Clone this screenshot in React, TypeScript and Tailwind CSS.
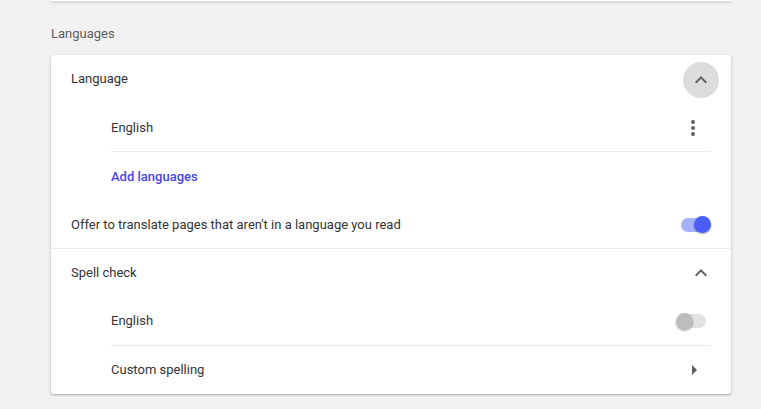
import React from 'react';

const font = { fontFamily: 'Roboto, "Noto Sans", sans-serif' };

function ChevronUp() {
  return (
    <svg width="12" height="8" viewBox="0 0 12 8" className="block">
      <path d="M1.4 7.4 6 2.8l4.6 4.6L12 6 6 0 0 6z" fill="#5f5f5f" />
    </svg>
  );
}

function Toggle({ on }: { on: boolean }) {
  return (
    <div className="relative w-[34px] h-[17px] flex items-center">
      <div
        className={
          on
            ? 'ml-[4px] h-[14px] w-[28px] rounded-full bg-[#a5b1fb]'
            : 'ml-[4px] h-[14px] w-[26px] rounded-full bg-[#e2e2e2]'
        }
      />
      <div
        className={
          on
            ? 'absolute right-0 top-0 h-[17px] w-[17px] rounded-full bg-[#4b5ef5] shadow-[0_1px_2px_rgba(0,0,0,0.35)]'
            : 'absolute left-0 top-0 h-[17px] w-[17px] rounded-full bg-[#bdbdbd] shadow-[0_1px_2px_rgba(0,0,0,0.3)]'
        }
      />
    </div>
  );
}

export default function App() {
  return (
    <div className="min-h-[409px] w-[761px] bg-[#f1f1f1] relative overflow-hidden" style={font}>
      <div className="ml-[51px] mr-[30px] h-[1px] bg-white shadow-[0_1px_3px_rgba(0,0,0,0.35)]" />
      <div className="ml-[51px] mr-[30px] pt-[24px] pb-[12px] text-[13px] text-[#5e5e5e] leading-[18px]">
        Languages
      </div>
      <div className="ml-[51px] mr-[30px] bg-white rounded-[2px] shadow-[0_1px_2px_rgba(0,0,0,0.22),0_1px_3px_rgba(0,0,0,0.12)] text-[13px] text-[#333]">
        <div className="h-[49px] flex items-center pl-[20px] pr-[12px]">
          <span className="flex-1 -mt-[1px]">Language</span>
          <div className="w-[36px] h-[36px] mt-[1px] rounded-full bg-[#dcdcdc] flex items-center justify-center">
            <ChevronUp />
          </div>
        </div>
        <div className="pl-[60px] pr-[20px]">
          <div className="h-[48px] flex items-center border-b border-[#ebebeb]">
            <span className="flex-1">English</span>
            <div className="flex flex-col gap-[2px] mr-[16px] items-center">
              <span className="w-[4px] h-[4px] rounded-full bg-[#5f5f5f]" />
              <span className="w-[4px] h-[4px] rounded-full bg-[#5f5f5f]" />
              <span className="w-[4px] h-[4px] rounded-full bg-[#5f5f5f]" />
            </div>
          </div>
          <div className="h-[49px] flex items-center font-medium text-[#4646e6]">Add languages</div>
        </div>
        <div className="h-[48px] flex items-center pl-[20px] pr-[20px] border-b border-[#ebebeb]">
          <span className="flex-1">Offer to translate pages that aren't in a language you read</span>
          <Toggle on />
        </div>
        <div className="h-[48px] flex items-center pl-[20px] pr-[24px]">
          <span className="flex-1">Spell check</span>
          <ChevronUp />
        </div>
        <div className="pl-[60px] pr-[20px]">
          <div className="h-[49px] flex items-center border-b border-[#ebebeb]">
            <span className="flex-1">English</span>
            <div className="mr-[1px]">
              <Toggle on={false} />
            </div>
          </div>
          <div className="h-[48px] flex items-center">
            <span className="flex-1">Custom spelling</span>
            <svg width="5" height="10" viewBox="0 0 5 10" className="mr-[14px]">
              <path d="M0 0l5 5-5 5z" fill="#5f5f5f" />
            </svg>
          </div>
        </div>
      </div>
    </div>
  );
}
